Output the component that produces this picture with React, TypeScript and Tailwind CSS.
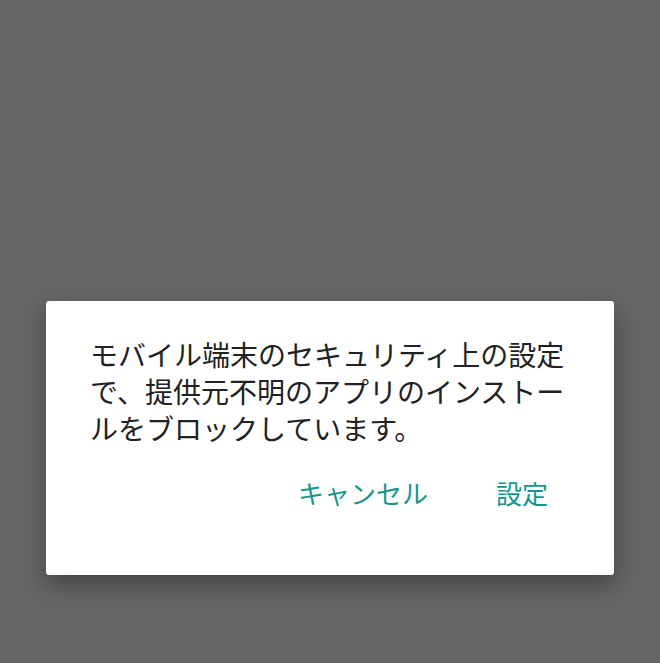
export default function App() {
  return (
    <div
      className="w-[660px] h-[663px] bg-[#666666] flex flex-col items-center pt-[301px]"
      style={{ fontFamily: '"Noto Sans CJK JP", "Noto Sans", sans-serif' }}
    >
      <div className="w-[568px] h-[274px] bg-white rounded-[3px] shadow-[0_10px_24px_rgba(0,0,0,0.35)] pl-[44px] pt-[35px]">
        <p className="w-[480px] text-[28px] leading-[37px] text-[#212121]">
          モバイル端末のセキュリティ上の設定で、提供元不明のアプリのインストールをブロックしています。
        </p>
        <div className="flex justify-end items-center pr-[66px] mt-[29px] gap-[68px] text-[26px] leading-[34px] text-[#16968a]">
          <button>キャンセル</button>
          <button>設定</button>
        </div>
      </div>
    </div>
  )
}
